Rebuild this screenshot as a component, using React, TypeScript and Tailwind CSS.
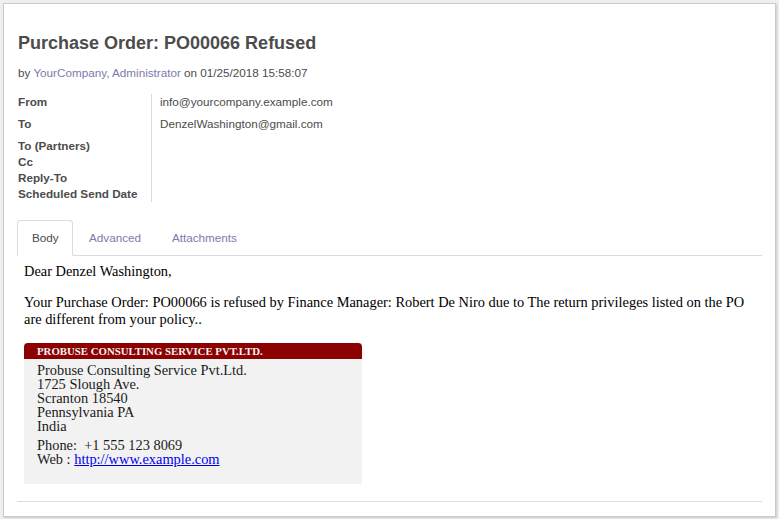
export default function App() {
  const sans = { fontFamily: '"Liberation Sans", Arial, sans-serif' };
  const serif = { fontFamily: '"Liberation Serif", "Times New Roman", serif' };

  const labels: [string, string | null, string][] = [
    ['From', 'info@yourcompany.example.com', 'h-[22px]'],
    ['To', 'DenzelWashington@gmail.com', 'h-[22px]'],
    ['To (Partners)', null, 'h-[16px]'],
    ['Cc', null, 'h-[16px]'],
    ['Reply-To', null, 'h-[16px]'],
    ['Scheduled Send Date', null, 'h-[16px]'],
  ];

  return (
    <div className="w-[779px] h-[519px] bg-[#efefef] pl-[3px] pt-[3px] pr-[3px] pb-[2px]" style={sans}>
      <div className="h-full bg-white border border-[#c9c9d1] shadow-[1px_1px_2px_rgba(0,0,0,0.15)] pl-[13px] pr-[13px] pt-[28px]">
        <h1 className="text-[18px] font-bold text-[#4c4c4c] leading-[22px] ml-[1px]">
          Purchase Order: PO00066 Refused
        </h1>
        <div className="text-[11.7px] text-[#4c4c4c] mt-[12px] ml-[1px] leading-[14px]">
          by <span className="text-[#7c7bad]">YourCompany, Administrator</span> on 01/25/2018 15:58:07
        </div>

        <div className="flex mt-[14px] ml-[1px]">
          <div className="w-[134px] border-r border-[#dcdcdc] flex flex-col">
            {labels.map(([l, , h]) => (
              <div key={l} className={`${h} text-[11.7px] font-bold text-[#4c4c4c] leading-[16px]`}>
                {l}
              </div>
            ))}
          </div>
          <div className="flex flex-col pl-[8px]">
            {labels.slice(0, 2).map(([l, v]) => (
              <div key={l} className="h-[22px] text-[11.7px] text-[#4c4c4c] leading-[16px]">
                {v}
              </div>
            ))}
          </div>
        </div>

        <div className="mt-[18px] flex border-b border-[#dcdcdc] h-[36px]">
          <div className="pl-[14px] border border-[#dcdcdc] border-b-white -mb-px rounded-t-[3px] bg-white flex items-center text-[11.7px] text-[#4c4c4c] w-[56px]">
            Body
          </div>
          <div className="pl-[16px] pr-[16px] flex items-center text-[11.7px] text-[#7c7bad]">Advanced</div>
          <div className="pl-[15px] flex items-center text-[11.7px] text-[#7c7bad]">Attachments</div>
        </div>

        <div className="pl-[7px] pt-[7px] text-[14.4px] text-black leading-[17px]" style={serif}>
          <p>Dear Denzel Washington,</p>
          <p className="mt-[14px]">
            Your Purchase Order: PO00066 is refused by Finance Manager: Robert De Niro due to The return privileges listed on the PO are different from your policy..
          </p>

          <div className="mt-[15px] w-[338px] bg-[#f2f2f2] pb-[18px]">
            <div className="bg-[#8b0000] rounded-t-[4px] h-[16px] pl-[13px] text-[10.8px] font-bold text-[#f2f2f2] leading-[17px]">
              PROBUSE CONSULTING SERVICE PVT.LTD.
            </div>
            <div className="pl-[13px] pt-[4px] text-[14.4px] leading-[14px] text-[#1a1a1a]">
              <div>Probuse Consulting Service Pvt.Ltd.</div>
              <div>1725 Slough Ave.</div>
              <div>Scranton 18540</div>
              <div>Pennsylvania PA</div>
              <div>India</div>
              <div className="mt-[5px]">Phone:&nbsp; +1 555 123 8069</div>
              <div>
                Web : <a className="text-[#0000ee] underline">http://www.example.com</a>
              </div>
            </div>
          </div>
        </div>

        <div className="mt-[17px] border-t border-[#dcdcdc]" />
      </div>
    </div>
  );
}
